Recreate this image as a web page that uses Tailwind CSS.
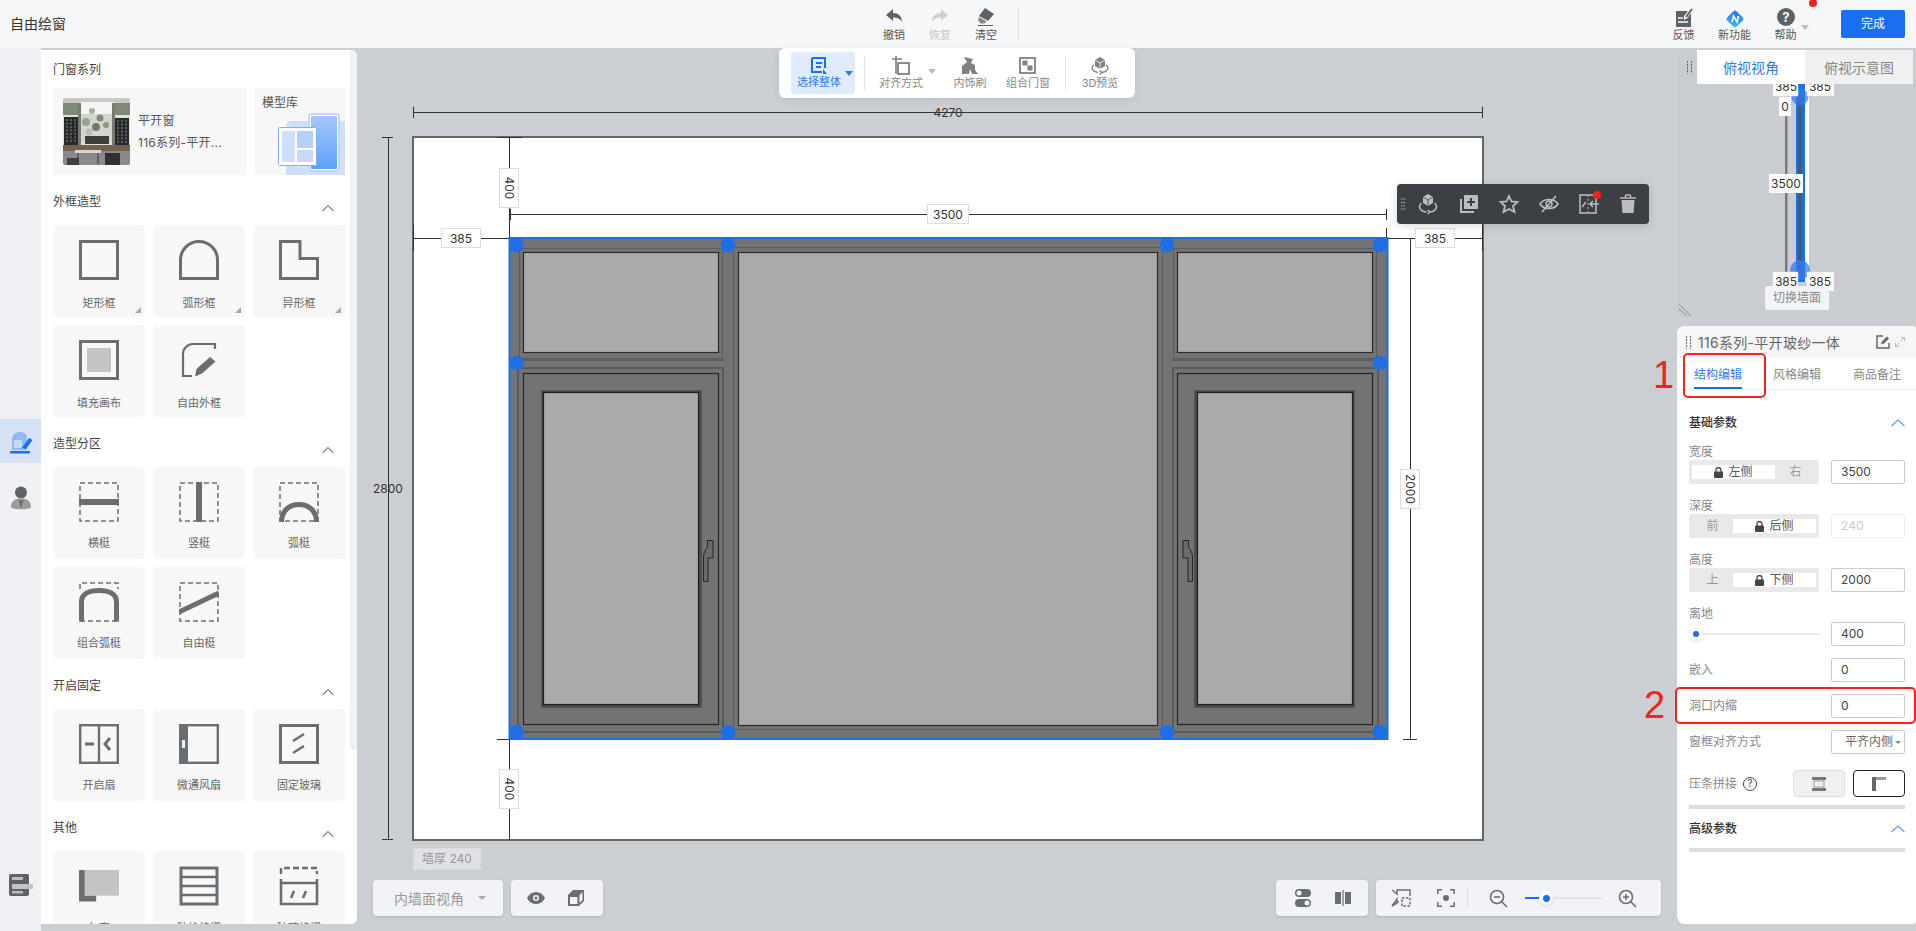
<!DOCTYPE html>
<html lang="zh">
<head>
<meta charset="utf-8">
<title>自由绘窗</title>
<script src="https://cdn.jsdelivr.net/npm/@tailwindcss/browser@4"></script>
</head>
<body class="bg-[#cbced3] [font-family:Inter,'Noto_Sans_CJK_SC',sans-serif] overflow-hidden">
<div class="relative w-[1916px] h-[931px] overflow-hidden flex flex-col">

  <!-- top bar -->
  <header class="h-12 shrink-0 bg-[#f6f7f9] flex items-center">
    <div class="w-[871px] pl-[10px] -mt-[1px] text-[14px] text-[#333]">自由绘窗</div>
    <div class="w-[46px] flex flex-col items-center text-[11px] leading-[14px] text-[#555]">
      <svg class="w-[18px] h-[21px]" viewBox="0 0 18 21"><path d="M1 8 L8 2 V6 C13 6 17 9 17 15 C15 11.500 12 10.500 8 10.500 V14Z" fill="#5f6265"/></svg>撤销
    </div>
    <div class="w-[46px] flex flex-col items-center text-[11px] leading-[14px] text-[#c8c8c8]">
      <svg class="w-[18px] h-[21px]" viewBox="0 0 18 21"><path d="M17 8 L10 2 V6 C5 6 1 9 1 15 C3 11.500 6 10.500 10 10.500 V14Z" fill="#cfcfcf"/></svg>恢复
    </div>
    <div class="w-[46px] flex flex-col items-center text-[11px] leading-[14px] text-[#555]">
      <svg class="w-[18px] h-[21px]" viewBox="0 0 18 21"><path d="M8 1 L17 7 L11 14 L2 9Z" fill="#5f6265"/><path d="M2 10 L9.500 14.500 L7.500 16.500 H3.500 L1 13Z" fill="#5f6265" opacity=".75"/><path d="M1 18 H16 V19 H1Z" fill="#5f6265"/></svg>清空
    </div>
    <div class="ml-[9px] w-px h-8 bg-[#dcdde0]"></div>

    <div class="ml-auto flex items-center mr-[11px]">
      <div class="w-[51px] flex flex-col items-center text-[11px] leading-[14px] text-[#555]">
        <svg class="w-5 h-[21px]" viewBox="0 0 20 21"><path d="M2 4 H14 L10 9 V13 L13.500 11 L17 6 V20 H2Z" fill="#5f6265"/><path d="M4 11 H9 M4 15 H14" stroke="#f6f7f9" stroke-width="1.500"/><path d="M12 10 L18 2" stroke="#5f6265" stroke-width="2"/></svg>反馈
      </div>
      <div class="w-[51px] flex flex-col items-center text-[11px] leading-[14px] text-[#555]">
        <svg class="w-5 h-[21px]" viewBox="0 0 20 21"><defs><linearGradient id="nf" x1="0" y1="0" x2="1" y2="1"><stop offset="0" stop-color="#1a6ff0"/><stop offset="1" stop-color="#3fc2f5"/></linearGradient></defs><rect x="3.500" y="5.500" width="13" height="13" rx="2" transform="rotate(45 10 12)" fill="url(#nf)"/><path d="M7 15 L8.500 9 L12 15 L13.500 9" stroke="#fff" stroke-width="1.600" fill="none"/></svg>新功能
      </div>
      <div class="relative w-[51px] flex flex-col items-center text-[11px] leading-[14px] text-[#555]">
        <svg class="w-5 h-[21px]" viewBox="0 0 20 21"><circle cx="10" cy="10" r="9" fill="#5f6265"/><text x="10" y="14.500" text-anchor="middle" font-size="13" font-weight="700" fill="#f6f7f9">?</text></svg>帮助
        <span class="absolute left-[41px] top-[18px] border-x-[4px] border-x-transparent border-t-[5px] border-t-[#bbb]"></span>
        <span class="absolute left-[49px] top-[-8px] w-2 h-2 rounded-full bg-[#f5221b]"></span>
      </div>
      <div class="ml-[30px] w-16 h-7 rounded-[2px] bg-[#1a6ff0] text-white text-[12px] flex items-center justify-center">完成</div>
    </div>
  </header>

  <div class="flex-1 flex min-h-0">
    <!-- left rail -->
    <nav class="w-[41px] shrink-0 bg-[#eff1f5] flex flex-col items-center">
      <div class="mt-[371px] w-full h-11 bg-[#d5e2f5] flex items-center justify-center">
        <svg class="w-[24px] h-[26px]" viewBox="0 0 24 26"><path d="M3 22 V11 C3 2 17 2 18 9 V22Z" fill="#8fb8f5"/><path d="M5 12 H13 V20 H5Z" fill="#c4dafa"/><path d="M13 20 L20 10 L23.500 12 L17 21 Z" fill="#1a6ff0"/><rect x="1" y="23" width="20" height="2.500" rx="1" fill="#1a6ff0"/></svg>
      </div>
      <div class="mt-[23px]">
        <svg class="w-[22px] h-6" viewBox="0 0 22 24"><circle cx="11" cy="6.500" r="6" fill="#5f6265"/><path d="M1 21 C1 15 5 12.500 11 12.500 C17 12.500 21 15 21 21 C21 24 1 24 1 21Z" fill="#9a9b9d"/><path d="M8 13 L11 15 L14 13 L11 22Z" fill="#6b6e71"/></svg>
      </div>
      <div class="mt-auto mb-[35px]">
        <svg class="w-[24px] h-[22px]" viewBox="0 0 24 22"><rect x="0" y="0" width="20" height="22" rx="2" fill="#5f6265"/><rect x="3" y="3" width="11" height="3" fill="#bbb"/><rect x="3" y="10" width="21" height="5" rx="1" fill="#c4c4c4"/><rect x="3" y="17" width="11" height="2.500" fill="#bbb"/></svg>
      </div>
    </nav>

    <!-- left panel -->
    <aside class="relative w-[316px] h-[874px] mt-[2px] shrink-0 bg-white rounded-r-[6px] overflow-hidden pl-[12px] pr-[12px] text-[#666]">
      <div class="absolute right-0 top-0 w-[7px] h-[700px] bg-[#f1f1f1] rounded-[3px]"></div>

      <h2 class="pt-[10px] pb-2 text-[12px] leading-[20px] text-[#444]">门窗系列</h2>
      <div class="flex gap-2">
        <div class="w-[193px] h-[87px] bg-[#f7f7f7] flex items-center pl-[10px]">
          <svg class="w-[67px] h-[67px] rounded-[2px]" viewBox="0 0 67 67">
            <rect width="67" height="67" fill="#dfe3dd"/>
            <rect x="0" y="0" width="67" height="6" fill="#c7c9c4"/>
            <rect x="17" y="4" width="34" height="12" fill="#f4f5f2"/>
            <rect x="17" y="16" width="34" height="28" fill="#d2d6cd"/>
            <rect x="0" y="5" width="15" height="12" fill="#7e8a78"/>
            <rect x="50" y="5" width="17" height="12" fill="#7e8a78"/>
            <rect x="1" y="19" width="14" height="28" fill="#26282a"/>
            <rect x="52" y="20" width="14" height="27" fill="#26282a"/>
            <path d="M4 21 V45 M8 21 V45 M12 21 V45 M55 22 V45 M59 22 V45 M63 22 V45" stroke="#8d908c" stroke-width="1" stroke-dasharray="2 1.500"/>
            <rect x="15" y="5" width="3" height="43" fill="#7c7773"/>
            <rect x="49" y="5" width="3" height="43" fill="#7c7773"/>
            <circle cx="29" cy="13" r="3" fill="#a7b29f"/><circle cx="37" cy="20" r="3.500" fill="#7e8b78"/><circle cx="23" cy="24" r="4" fill="#97a38f"/><circle cx="33" cy="29" r="4" fill="#6f7c6a"/><circle cx="43" cy="27" r="3" fill="#8a9684"/><circle cx="26" cy="34" r="3.500" fill="#b9c0b3"/>
            <rect x="22" y="38" width="24" height="8" fill="#3c3e3c"/>
            <rect x="0" y="47" width="67" height="6" fill="#75604c"/>
            <rect x="0" y="53" width="67" height="14" fill="#8a8b88"/>
            <rect x="4" y="60" width="12" height="7" fill="#3f3f3d"/>
            <rect x="12" y="52" width="26" height="3" fill="#d6d6d0"/>
            <path d="M15 55 V66 M35 55 V66" stroke="#3a3a38" stroke-width="1"/>
            <rect x="42" y="55" width="15" height="12" fill="#33312f"/>
          </svg>
          <div class="ml-[8px] text-[12px] leading-[22px] text-[#555] tracking-[0.25px]">
            <div>平开窗</div>
            <div>116系列-平开...</div>
          </div>
        </div>
        <div class="relative w-[91px] h-[87px] bg-[#f7f7f7] overflow-hidden text-[12px] text-[#555] pl-2 pt-[5px] leading-[20px]">
          模型库
          <svg class="absolute left-0 top-0 w-[91px] h-[87px]" viewBox="0 0 91 87">
            <defs><linearGradient id="dr" x1="0" y1="0" x2="0" y2="1"><stop offset="0" stop-color="#a9cafa"/><stop offset="1" stop-color="#5a9efa"/></linearGradient></defs>
            <path d="M32 38 a5 5 0 0 1 5 -5 H91 V87 H32Z" fill="#cfe0fd"/>
            <rect x="55.500" y="26.500" width="29" height="56" rx="2" fill="url(#dr)" stroke="#fff" stroke-width="3"/>
            <rect x="55" y="26" width="30" height="57" rx="2" fill="none" stroke="#7fb0f8" stroke-width="1"/>
            <rect x="24.500" y="39.500" width="38" height="38" rx="1" fill="#fff" stroke="#7fb0f8" stroke-width="1"/>
            <rect x="28" y="43" width="13" height="31" fill="#cfdffc"/>
            <rect x="43" y="43" width="16" height="17" fill="#b5cffa"/>
            <rect x="43" y="62" width="16" height="12" fill="#c4d9fb"/>
          </svg>
        </div>
      </div>

      <!-- 外框造型 -->
      <div class="h-[50px] flex justify-between pr-[11px]">
        <h2 class="pt-[17px] text-[12px] leading-[20px] text-[#444]">外框造型</h2>
        <svg class="mt-[29px] w-3 h-2" viewBox="0 0 12 8"><path d="M0.500 7 L6 1.500 L11.500 7" fill="none" stroke="#888" stroke-width="1.200"/></svg>
      </div>
      <div class="grid grid-cols-[92px_92px_92px] gap-2">
        <div class="relative h-[92px] rounded-[4px] bg-[#f7f7f7] flex flex-col items-center pt-[15px] text-[11px] leading-[16px]">
          <svg class="w-10 h-10 mb-[15px]" viewBox="0 0 40 40"><rect x="1.500" y="1.500" width="37" height="37" fill="none" stroke="#6b6e71" stroke-width="3"/></svg>矩形框
          <span class="absolute right-[4px] bottom-[4px] border-l-[6px] border-l-transparent border-b-[6px] border-b-[#aaa]"></span>
        </div>
        <div class="relative h-[92px] rounded-[4px] bg-[#f7f7f7] flex flex-col items-center pt-[15px] text-[11px] leading-[16px]">
          <svg class="w-10 h-10 mb-[15px]" viewBox="0 0 40 40"><path d="M1.500 38.500 V20 a18.500 18.500 0 0 1 37 0 V38.500Z" fill="none" stroke="#6b6e71" stroke-width="3"/></svg>弧形框
          <span class="absolute right-[4px] bottom-[4px] border-l-[6px] border-l-transparent border-b-[6px] border-b-[#aaa]"></span>
        </div>
        <div class="relative h-[92px] rounded-[4px] bg-[#f7f7f7] flex flex-col items-center pt-[15px] text-[11px] leading-[16px]">
          <svg class="w-10 h-10 mb-[15px]" viewBox="0 0 40 40"><path d="M1.500 1.500 H21 V18.500 H38.500 V38.500 H1.500Z" fill="none" stroke="#6b6e71" stroke-width="3"/></svg>异形框
          <span class="absolute right-[4px] bottom-[4px] border-l-[6px] border-l-transparent border-b-[6px] border-b-[#aaa]"></span>
        </div>
        <div class="h-[92px] rounded-[4px] bg-[#f7f7f7] flex flex-col items-center pt-[15px] text-[11px] leading-[16px]">
          <svg class="w-10 h-10 mb-[15px]" viewBox="0 0 40 40"><rect x="1.500" y="1.500" width="37" height="37" fill="none" stroke="#6b6e71" stroke-width="3"/><rect x="8" y="8" width="24" height="24" fill="#c4c4c4"/></svg>填充画布
        </div>
        <div class="h-[92px] rounded-[4px] bg-[#f7f7f7] flex flex-col items-center pt-[15px] text-[11px] leading-[16px]">
          <svg class="w-10 h-10 mb-[15px]" viewBox="0 0 40 40"><path d="M36 9 V4 H14 a10 10 0 0 0 -10 10 V36 H13" fill="none" stroke="#6b6e71" stroke-width="2.200"/><path d="M16 36.500 L17.500 29 L31 17 L36.500 21.500 L23 33.500Z" fill="#6b6e71"/></svg>自由外框
        </div>
      </div>

      <!-- 造型分区 -->
      <div class="h-[50px] flex justify-between pr-[11px]">
        <h2 class="pt-[17px] text-[12px] leading-[20px] text-[#444]">造型分区</h2>
        <svg class="mt-[29px] w-3 h-2" viewBox="0 0 12 8"><path d="M0.500 7 L6 1.500 L11.500 7" fill="none" stroke="#888" stroke-width="1.200"/></svg>
      </div>
      <div class="grid grid-cols-[92px_92px_92px] gap-2">
        <div class="h-[92px] rounded-[4px] bg-[#f7f7f7] flex flex-col items-center pt-[15px] text-[11px] leading-[16px]">
          <svg class="w-10 h-10 mb-[13px]" viewBox="0 0 40 40"><rect x="1" y="1" width="38" height="38" fill="none" stroke="#6b6e71" stroke-width="1.500" stroke-dasharray="5 3"/><rect y="17" width="40" height="6" fill="#6b6e71"/></svg>横梃
        </div>
        <div class="h-[92px] rounded-[4px] bg-[#f7f7f7] flex flex-col items-center pt-[15px] text-[11px] leading-[16px]">
          <svg class="w-10 h-10 mb-[13px]" viewBox="0 0 40 40"><rect x="1" y="1" width="38" height="38" fill="none" stroke="#6b6e71" stroke-width="1.500" stroke-dasharray="5 3"/><rect x="17" width="6" height="40" fill="#6b6e71"/></svg>竖梃
        </div>
        <div class="h-[92px] rounded-[4px] bg-[#f7f7f7] flex flex-col items-center pt-[15px] text-[11px] leading-[16px]">
          <svg class="w-10 h-10 mb-[13px]" viewBox="0 0 40 40"><rect x="1" y="1" width="38" height="38" fill="none" stroke="#6b6e71" stroke-width="1.500" stroke-dasharray="5 3"/><path d="M2.500 40 C2.500 29 10 22.500 20 22.500 S37.500 29 37.500 40" fill="none" stroke="#6b6e71" stroke-width="5"/></svg>弧梃
        </div>
        <div class="h-[92px] rounded-[4px] bg-[#f7f7f7] flex flex-col items-center pt-[15px] text-[11px] leading-[16px]">
          <svg class="w-10 h-10 mb-[13px]" viewBox="0 0 40 40"><path d="M1 7 V1 H39 V7" fill="none" stroke="#6b6e71" stroke-width="1.500" stroke-dasharray="5 3"/><path d="M1 39 H39" stroke="#6b6e71" stroke-width="1.500" stroke-dasharray="5 3"/><path d="M2.500 39.500 V20 C2.500 12 10 8.500 20 8.500 S37.500 12 37.500 20 V39.500" fill="none" stroke="#6b6e71" stroke-width="5"/></svg>组合弧梃
        </div>
        <div class="h-[92px] rounded-[4px] bg-[#f7f7f7] flex flex-col items-center pt-[15px] text-[11px] leading-[16px]">
          <svg class="w-10 h-10 mb-[13px]" viewBox="0 0 40 40"><rect x="1" y="1" width="38" height="38" fill="none" stroke="#6b6e71" stroke-width="1.500" stroke-dasharray="5 3"/><path d="M0 30 L40 11" stroke="#6b6e71" stroke-width="5"/></svg>自由梃
        </div>
      </div>

      <!-- 开启固定 -->
      <div class="h-[50px] flex justify-between pr-[11px]">
        <h2 class="pt-[17px] text-[12px] leading-[20px] text-[#444]">开启固定</h2>
        <svg class="mt-[29px] w-3 h-2" viewBox="0 0 12 8"><path d="M0.500 7 L6 1.500 L11.500 7" fill="none" stroke="#888" stroke-width="1.200"/></svg>
      </div>
      <div class="grid grid-cols-[92px_92px_92px] gap-2">
        <div class="h-[92px] rounded-[4px] bg-[#f7f7f7] flex flex-col items-center pt-[15px] text-[11px] leading-[16px]">
          <svg class="w-10 h-10 mb-[13px]" viewBox="0 0 40 40"><rect x="1.200" y="1.200" width="37.600" height="37.600" fill="none" stroke="#6b6e71" stroke-width="2.400"/><path d="M20 1 V39" stroke="#6b6e71" stroke-width="2.400"/><path d="M6 20 H15" stroke="#6b6e71" stroke-width="3"/><path d="M31 14 L26 20 L31 26" fill="none" stroke="#6b6e71" stroke-width="3"/></svg>开启扇
        </div>
        <div class="h-[92px] rounded-[4px] bg-[#f7f7f7] flex flex-col items-center pt-[15px] text-[11px] leading-[16px]">
          <svg class="w-10 h-10 mb-[13px]" viewBox="0 0 40 40"><rect x="1.200" y="1.200" width="37.600" height="37.600" fill="none" stroke="#6b6e71" stroke-width="2.400"/><rect width="9" height="40" fill="#6b6e71"/><rect x="3" y="16" width="3" height="8" fill="#eee"/></svg>微通风扇
        </div>
        <div class="h-[92px] rounded-[4px] bg-[#f7f7f7] flex flex-col items-center pt-[15px] text-[11px] leading-[16px]">
          <svg class="w-10 h-10 mb-[13px]" viewBox="0 0 40 40"><rect x="1.500" y="1.500" width="37" height="37" fill="none" stroke="#6b6e71" stroke-width="3"/><path d="M14 17 L25 10 M14 29 L25 22" stroke="#6b6e71" stroke-width="2.500"/></svg>固定玻璃
        </div>
      </div>

      <!-- 其他 -->
      <div class="h-[50px] flex justify-between pr-[11px]">
        <h2 class="pt-[17px] text-[12px] leading-[20px] text-[#444]">其他</h2>
        <svg class="mt-[29px] w-3 h-2" viewBox="0 0 12 8"><path d="M0.500 7 L6 1.500 L11.500 7" fill="none" stroke="#888" stroke-width="1.200"/></svg>
      </div>
      <div class="grid grid-cols-[92px_92px_92px] gap-2">
        <div class="h-[92px] rounded-[4px] bg-[#f7f7f7] flex flex-col items-center pt-[18px] text-[11px] leading-[16px]">
          <svg class="w-10 h-10 mb-[11px]" viewBox="0 0 42 40"><rect x="6" y="0" width="36" height="27" fill="#c4c4c4"/><path d="M0 0 H6 V27 H18 V33 H0Z" fill="#6b6e71"/></svg>包套
        </div>
        <div class="h-[92px] rounded-[4px] bg-[#f7f7f7] flex flex-col items-center pt-[15px] text-[11px] leading-[16px]">
          <svg class="w-10 h-10 mb-[14px]" viewBox="0 0 40 40"><rect x="2" y="2" width="36" height="36" fill="none" stroke="#6b6e71" stroke-width="3"/><path d="M2 11 H38 M2 20 H38 M2 29 H38" stroke="#6b6e71" stroke-width="2.500"/></svg>防栓格栅
        </div>
        <div class="h-[92px] rounded-[4px] bg-[#f7f7f7] flex flex-col items-center pt-[15px] text-[11px] leading-[16px]">
          <svg class="w-10 h-10 mb-[14px]" viewBox="0 0 40 40"><path d="M2 8 V2 H38 V8" fill="none" stroke="#6b6e71" stroke-width="2.400" stroke-dasharray="6 3"/><path d="M2 13 V38 H38 V13 M2 17 H38" fill="none" stroke="#6b6e71" stroke-width="2.600"/><path d="M12 32 L15 25 M24 32 L27 25" stroke="#6b6e71" stroke-width="2.500"/></svg>玻璃格栅
        </div>
      </div>
    </aside>

    <!-- drawing canvas -->
    <main class="relative flex-1 min-w-0">
      <svg class="absolute left-0 top-0 w-[1320px] h-[883px]" viewBox="357 48 1320 883">
        <defs>
          <g id="win-side">
            <rect x="519.500" y="248.500" width="203" height="110" fill="none" stroke="#5d5d5d"/>
            <rect x="523.500" y="252.500" width="195" height="100" fill="#a9aaac" stroke="#2b2b2b" stroke-width="1.200"/>
            <path d="M510 360 H724" stroke="#585858" stroke-width="1.500"/>
            <rect x="518" y="368" width="205" height="364" fill="none" stroke="#5a5a5a" stroke-width="2"/>
            <rect x="523.500" y="373.500" width="195" height="351" fill="none" stroke="#262626" stroke-width="1.200"/>
            <rect x="541.500" y="390.500" width="160" height="317" fill="#4b4b4b" stroke="#555"/>
            <rect x="543.500" y="392.500" width="155" height="312" fill="#a9aaac" stroke="#1f1f1f" stroke-width="1.200"/>
            <path d="M703.500 581.500 V558 C703.500 552 706 549 707.500 547 V540.500 H713 V558 H708 V581.500Z" fill="#6a6a6a" stroke="#262626"/>
          </g>
        </defs>

        <!-- wall -->
        <rect x="413" y="137" width="1070" height="703" fill="#fff" stroke="#666" stroke-width="2"/>

        <!-- outer dimensions -->
        <g stroke="#333" stroke-width="1" fill="none">
          <path d="M413 112.500 H1483 M413.500 107 V118 M1482.500 107 V118"/>
          <path d="M388.500 137 V840 M382 137.500 H393 M382 839.500 H393"/>
          <path d="M509.500 137 V238 M497 137.500 H522"/>
          <path d="M509.500 739 V840 M497 739.500 H522"/>
          <path d="M413 238.500 H509 M413.500 225 V251"/>
          <path d="M1387 238.500 H1483 M1482.500 225 V251"/>
          <path d="M510 214.500 H1387 M510.500 209 V220 M1386.500 209 V220 M1386.500 228 V238"/>
          <path d="M1410.500 238 V739 M1403 238.500 H1417 M1403 739.500 H1417"/>
        </g>

        <!-- window -->
        <rect x="510" y="238" width="877" height="501" fill="#747373"/>
        <use href="#win-side"/>
        <use href="#win-side" transform="translate(1896 0) scale(-1 1)"/>
        <rect x="733.500" y="247.500" width="429" height="482" fill="none" stroke="#5d5d5d"/>
        <rect x="738.500" y="252.500" width="419" height="473" fill="#a9aaac" stroke="#2b2b2b" stroke-width="1.200"/>
        <rect x="509.500" y="238" width="878" height="501" fill="none" stroke="#1a6fe8" stroke-width="2"/>

        <!-- handles -->
        <g fill="#1e6ee6">
          <circle cx="516.500" cy="245" r="7.300"/><circle cx="728" cy="245" r="7.300"/><circle cx="1167" cy="245" r="7.300"/><circle cx="1380" cy="245" r="7.300"/>
          <circle cx="516.500" cy="363" r="7.300"/><circle cx="1380" cy="363" r="7.300"/>
          <circle cx="516.500" cy="732" r="7.300"/><circle cx="728" cy="732" r="7.300"/><circle cx="1167" cy="732" r="7.300"/><circle cx="1380" cy="732" r="7.300"/>
        </g>

        <!-- labels -->
        <g font-size="12" fill="#333" text-anchor="middle">
          <text x="948" y="116.500">4270</text>
          <text x="388" y="492.500">2800</text>
          <rect x="441.500" y="228.500" width="39" height="19" fill="#fff" stroke="#ddd"/><text x="461" y="242.500">385</text>
          <rect x="1415.500" y="228.500" width="39" height="19" fill="#fff" stroke="#ddd"/><text x="1435" y="242.500">385</text>
          <rect x="927.500" y="204.500" width="41" height="19" fill="#fff" stroke="#ddd"/><text x="948" y="218.500">3500</text>
          <rect x="499.500" y="168.500" width="19" height="39" fill="#fff" stroke="#ddd"/><text transform="rotate(90 509 188)" x="509" y="192.500">400</text>
          <rect x="499.500" y="769.500" width="19" height="39" fill="#fff" stroke="#ddd"/><text transform="rotate(90 509 789)" x="509" y="793.500">400</text>
          <rect x="1400.500" y="469.500" width="19" height="39" fill="#fff" stroke="#ddd"/><text transform="rotate(90 1410 489)" x="1410" y="493.500">2000</text>
        </g>
      </svg>

      <div class="absolute left-[56px] top-[800px] w-[68px] h-[22px] bg-[#dfe1e5] border border-[#d8dade] text-[12px] text-[#999] flex items-center justify-center">墙厚 240</div>

      <!-- floating toolbar -->
      <div class="absolute left-[422px] top-0 w-[356px] h-[50px] bg-white rounded-[6px] shadow-[0_2px_8px_rgba(0,0,0,0.08)] flex items-center text-[11px] leading-[14px] text-[#888]">
        <div class="relative ml-[12px] w-[64px] h-[42px] rounded-[3px] bg-[#e0ecfd] text-[#2f7df0] pr-[8px] pt-[4px] flex flex-col items-center">
          <svg class="w-[18px] h-[19px]" viewBox="0 0 18 19"><path d="M2 2 H15 V12 M2 2 V16 H12 M6 7 H12 M6 11 H11" fill="none" stroke="#1a6ff0" stroke-width="2"/><path d="M13 13 L17 18 H13Z" fill="#1a6ff0"/></svg>
          选择整体
          <span class="absolute right-[2px] top-[19px] border-x-[4px] border-x-transparent border-t-[5px] border-t-[#2f7df0]"></span>
        </div>
        <div class="ml-[9px] w-px h-[34px] bg-[#e6e6e6]"></div>
        <div class="relative ml-[6px] w-[60px] flex flex-col items-center">
          <svg class="w-[18px] h-[19px] mb-[1px]" viewBox="0 0 18 19"><path d="M0 3 H10 M4 0 V3 M4 3 V18" fill="none" stroke="#808080" stroke-width="1.600"/><rect x="6" y="7" width="11" height="11" fill="none" stroke="#808080" stroke-width="1.800"/></svg>
          对齐方式
          <span class="absolute right-[-5px] top-[13px] border-x-[4px] border-x-transparent border-t-[5px] border-t-[#bbb]"></span>
        </div>
        <div class="ml-[12px] w-[54px] flex flex-col items-center">
          <svg class="w-[18px] h-[19px] mb-[1px]" viewBox="0 0 18 19"><path d="M1 18 V10 L6 6 L3 1 L12 3 L10 7 L14 9 V14 L17 18Z" fill="#808080"/><path d="M8 18 L9 13 L11 18Z" fill="#fff"/></svg>
          内饰刷
        </div>
        <div class="ml-[1px] w-[60px] flex flex-col items-center">
          <svg class="w-[18px] h-[19px] mb-[1px]" viewBox="0 0 18 19"><rect x="1" y="2" width="15" height="15" fill="none" stroke="#808080" stroke-width="1.800"/><rect x="3.500" y="4.500" width="5" height="5" fill="#808080"/><rect x="8.500" y="9.500" width="5" height="5" fill="#808080"/></svg>
          组合门窗
        </div>
        <div class="ml-[7px] w-px h-[34px] bg-[#e6e6e6]"></div>
        <div class="ml-[4px] w-[60px] flex flex-col items-center">
          <svg class="w-[20px] h-[19px] mb-[1px]" viewBox="0 0 20 19"><path d="M10 1 L15 4 V10 L10 13 L5 10 V4Z" fill="#808080"/><path d="M10 7 V13 M10 7 L15 4 M10 7 L5 4" stroke="#fff" stroke-width=".8"/><path d="M4 9 C0 12 3 16 8 16.500 M16 9 C20 12 17 16 12 16.500 M9.500 14.500 L12 16.500 L9.500 18.500" fill="none" stroke="#808080" stroke-width="1.300"/></svg>
          3D预览
        </div>
      </div>

      <!-- element toolbar -->
      <div class="absolute left-[1040px] top-[136px] w-[252px] h-10 rounded-[4px] bg-[#3c3f44] shadow-[0_2px_8px_rgba(0,0,0,0.15)] flex items-center">
        <svg class="ml-[4px] w-[4px] h-[12px]" viewBox="0 0 4 12"><path d="M0 1 H4 M0 4.500 H4 M0 8 H4 M0 11 H4" stroke="#bbb" stroke-dasharray="1.500 1"/></svg>
        <svg class="ml-[12px] w-[22px] h-[22px]" viewBox="0 0 22 22"><path d="M11 1 L16 4 V10 L11 13 L6 10 V4Z" fill="#bdbdbd"/><path d="M11 7 V13 M11 7 L16 4 M11 7 L6 4" stroke="#3c3f44" stroke-width=".8"/><path d="M4.500 10 C0 14 4 18.500 9.500 19 M17.500 10 C22 14 18 18.500 13 19 M10.500 17 L13 19 L10.500 21" fill="none" stroke="#bdbdbd" stroke-width="1.500"/></svg>
        <svg class="ml-[20px] w-[20px] h-[20px]" viewBox="0 0 20 20"><rect x="5" y="1" width="14" height="14" rx="1" fill="#bdbdbd"/><path d="M12 4 V12 M8 8 H16" stroke="#3c3f44" stroke-width="2"/><path d="M2 5 V18 H15" fill="none" stroke="#bdbdbd" stroke-width="2"/></svg>
        <svg class="ml-[20px] w-[20px] h-[20px]" viewBox="0 0 20 20"><path d="M10 2 L12.500 7.500 L18.500 8 L14 12 L15.500 18 L10 15 L4.500 18 L6 12 L1.500 8 L7.500 7.500Z" fill="none" stroke="#bdbdbd" stroke-width="1.800"/></svg>
        <svg class="ml-[20px] w-[20px] h-[20px]" viewBox="0 0 20 20"><path d="M1 10 C5 4 15 4 19 10 C15 16 5 16 1 10Z" fill="none" stroke="#bdbdbd" stroke-width="1.600"/><circle cx="10" cy="10" r="3" fill="none" stroke="#bdbdbd" stroke-width="1.400"/><path d="M3 18 L17 2" stroke="#bdbdbd" stroke-width="1.600"/></svg>
        <div class="relative ml-[20px] w-[20px] h-[20px]">
          <svg class="w-[20px] h-[20px]" viewBox="0 0 20 20"><rect x="1" y="1" width="16" height="18" fill="none" stroke="#bdbdbd" stroke-width="1.500"/><path d="M9 1 V19" stroke="#bdbdbd" stroke-dasharray="2 2"/><path d="M20 10 H11 M14 7 L11 10 L14 13 M3 13 L7 8" fill="none" stroke="#bdbdbd" stroke-width="1.500"/></svg>
          <span class="absolute right-[-2px] top-[-3px] w-2 h-2 rounded-full bg-[#f5221b]"></span>
        </div>
        <svg class="ml-[20px] w-[18px] h-[20px]" viewBox="0 0 18 20"><path d="M1 4 H17 M6 3 L7 1 H11 L12 3" fill="none" stroke="#bdbdbd" stroke-width="1.600"/><path d="M2.500 6 H15.500 L14.500 19 H3.500Z" fill="#bdbdbd"/></svg>
      </div>

      <!-- bottom controls -->
      <div class="absolute left-4 right-4 bottom-[15px] flex justify-between">
        <div class="flex gap-2">
          <div class="w-[130px] h-9 rounded-[4px] bg-[#f1f3f6] shadow-sm flex items-center justify-center gap-[14px] pl-[4px] text-[14px] text-[#999]">内墙面视角<span class="border-x-[4px] border-x-transparent border-t-[4px] border-t-[#aaa]"></span></div>
          <div class="w-[92px] h-9 rounded-[4px] bg-[#f1f3f6] shadow-sm flex items-center pl-[16px] gap-[22px]">
            <svg class="w-[18px] h-[14px]" viewBox="0 0 18 14"><path d="M0 7 C4 -1 14 -1 18 7 C14 15 4 15 0 7Z" fill="#6b6e71"/><circle cx="9" cy="7" r="3" fill="#f1f3f6"/><circle cx="9" cy="7" r="1.500" fill="#6b6e71"/></svg>
            <svg class="w-[18px] h-[18px]" viewBox="0 0 18 18"><path d="M1 6 L6 1 H17 V12 L12 17 H1Z" fill="#6b6e71"/><path d="M3 8 H10.500 V15 H3Z" fill="#f1f3f6"/><path d="M12.500 6 L15.500 3 V11 L12.500 14Z" fill="#f1f3f6"/></svg>
          </div>
        </div>
        <div class="flex gap-2">
          <div class="w-[92px] h-9 rounded-[4px] bg-[#f1f3f6] shadow-sm flex items-center pl-[19px] gap-[24px]">
            <svg class="w-4 h-[18px]" viewBox="0 0 16 18"><rect y="0" width="16" height="8" rx="4" fill="#6b6e71"/><rect y="10" width="16" height="8" rx="4" fill="#6b6e71"/><circle cx="4" cy="4" r="2.500" fill="#f1f3f6"/><circle cx="12" cy="14" r="2.500" fill="#f1f3f6"/></svg>
            <svg class="w-4 h-[16px]" viewBox="0 0 16 16"><rect y="2" width="6" height="12" fill="#6b6e71"/><rect x="10" y="2" width="6" height="12" fill="#6b6e71"/><path d="M8 0 V16" stroke="#6b6e71" stroke-width="1.200"/></svg>
          </div>
          <div class="w-[285px] h-9 rounded-[4px] bg-[#f1f3f6] shadow-sm flex items-center pl-[15px]">
            <svg class="w-5 h-[18px]" viewBox="0 0 20 18"><path d="M1 1 L6 5 V1 H19 V7 M6 10 V14 L1 17Z M6 13 H8" fill="none" stroke="#6b6e71" stroke-width="1.500"/><rect x="11" y="9" width="8" height="8" fill="none" stroke="#6b6e71" stroke-width="1.500" stroke-dasharray="2.500 1.500"/></svg>
            <svg class="ml-[26px] w-[18px] h-[18px]" viewBox="0 0 18 18"><path d="M0.800 5 V0.800 H5 M13 0.800 H17.200 V5 M17.200 13 V17.200 H13 M5 17.200 H0.800 V13" fill="none" stroke="#6b6e71" stroke-width="1.500"/><circle cx="9" cy="9" r="3" fill="#6b6e71"/></svg>
            <div class="ml-[12px] w-px h-5 bg-[#dcdde0]"></div>
            <svg class="ml-[21px] w-[19px] h-[19px]" viewBox="0 0 19 19"><circle cx="8" cy="8" r="6.500" fill="none" stroke="#6b6e71" stroke-width="1.600"/><path d="M5 8 H11" stroke="#6b6e71" stroke-width="1.600"/><path d="M12.500 12.500 L18 18" stroke="#6b6e71" stroke-width="1.600"/></svg>
            <div class="relative ml-[17px] w-[77px] h-[2px] bg-[#e2e3e6]">
              <div class="absolute left-0 top-0 w-[18px] h-[2px] bg-[#1a6ff0]"></div>
              <div class="absolute left-[14px] top-[-6px] w-[14px] h-[14px] rounded-full bg-white shadow-sm flex items-center justify-center"><span class="w-[7px] h-[7px] rounded-full bg-[#1a6ff0]"></span></div>
            </div>
            <svg class="ml-[16px] w-[19px] h-[19px]" viewBox="0 0 19 19"><circle cx="8" cy="8" r="6.500" fill="none" stroke="#6b6e71" stroke-width="1.600"/><path d="M5 8 H11 M8 5 V11" stroke="#6b6e71" stroke-width="1.600"/><path d="M12.500 12.500 L18 18" stroke="#6b6e71" stroke-width="1.600"/></svg>
          </div>
        </div>
      </div>
    </main>

    <!-- right column -->
    <div class="w-[239px] shrink-0 pt-[2px] flex flex-col gap-2">
      <!-- top view -->
      <section class="relative h-[268px] rounded-l-[8px] bg-[#c9ccd1] overflow-hidden">
        <svg class="absolute left-0 top-0 w-[239px] h-[268px]" viewBox="1677 50 239 268">
          <rect x="1785" y="110" width="2.500" height="165" fill="#7a7a7a"/>
          <rect x="1805" y="84" width="4" height="198" fill="#fff"/>
          <rect x="1796" y="84" width="9" height="198" fill="#1a6ff0"/>
          <rect x="1798.500" y="94" width="3" height="180" fill="#555"/>
          <circle cx="1800" cy="97" r="8.500" fill="#2f7df0" opacity=".7"/>
          <circle cx="1800" cy="270" r="10" fill="#2f7df0" opacity=".75"/>
          <g font-size="12" fill="#333" text-anchor="middle">
            <rect x="1773" y="78" width="25" height="18" fill="#fff" stroke="#ddd" stroke-width=".5"/><text x="1786" y="90.500">385</text>
            <rect x="1807" y="78" width="27" height="18" fill="#fff" stroke="#ddd" stroke-width=".5"/><text x="1820" y="90.500">385</text>
            <rect x="1779" y="97" width="12" height="19" fill="#fff"/><text x="1785" y="111">0</text>
            <rect x="1769" y="174" width="34" height="19" fill="#fff"/><text x="1786" y="188">3500</text>
            <rect x="1773" y="272" width="25" height="19" fill="#fff" stroke="#ddd" stroke-width=".5"/><text x="1786" y="286">385</text>
            <rect x="1807" y="272" width="27" height="19" fill="#fff" stroke="#ddd" stroke-width=".5"/><text x="1820" y="286">385</text>
          </g>
          <path d="M1679 304 L1691 316 M1679 309 L1687 316" stroke="#8b8e92" stroke-width="1"/>
        </svg>
        <div class="relative flex text-[14px] h-[34px] pl-[20px]">
          <svg class="absolute left-[10px] top-[11px] w-[5px] h-[13px]" viewBox="0 0 5 13"><path d="M0.500 0 V13 M4.500 0 V13" stroke="#666" stroke-dasharray="2 1"/></svg>
          <div class="w-[108px] bg-white text-[#2f7df0] flex items-center justify-center">俯视视角</div>
          <div class="w-[108px] bg-[#f0f0f0] text-[#888] flex items-center justify-center">俯视示意图</div>
        </div>
        <div class="absolute left-[88px] top-[236px] w-16 h-6 rounded-[2px] bg-[#f1f3f6] text-[12px] text-[#888] flex items-center justify-center">切换墙面</div>
      </section>

      <!-- properties -->
      <section class="h-[598px] rounded-l-[8px] rounded-r-[4px] bg-white overflow-hidden text-[12px] text-[#888]">
        <div class="h-8 bg-[#f6f6f6] flex items-center pl-[9px] pr-[11px]">
          <svg class="w-[5px] h-[13px]" viewBox="0 0 5 13"><path d="M0.500 0 V13 M4.500 0 V13" stroke="#666" stroke-dasharray="2 1"/></svg>
          <span class="ml-[7px] text-[14px] text-[#666] tracking-[0.3px]">116系列-平开玻纱一体</span>
          <svg class="ml-auto w-[14px] h-[14px]" viewBox="0 0 14 14"><path d="M7 1 H1 V13 H13 V8" fill="none" stroke="#666" stroke-width="1.500"/><path d="M5 9.500 L6 6.500 L11 1.500 L13 3.500 L8 8.500Z" fill="#666"/></svg>
          <svg class="ml-[5px] w-[10px] h-[10px]" viewBox="0 0 10 10"><path d="M6 0.500 H9.500 V4 M9.500 0.500 L6 4 M4 9.500 H0.500 V6 M0.500 9.500 L4 6" fill="none" stroke="#bbb"/></svg>
        </div>
        <div class="relative h-8 border-b border-[#eee] flex items-center">
          <div class="absolute left-[17px] bottom-0 w-12 h-[2px] bg-[#1a6ff0]"></div>
          <span class="absolute left-[17px] top-[8px] text-[#2f7df0]">结构编辑</span>
          <span class="absolute left-[96px] top-[8px]">风格编辑</span>
          <span class="absolute left-[176px] top-[8px]">商品备注</span>
        </div>

        <div class="pl-[12px] pr-[11px]">
          <div class="pt-[23px] mb-[9px] flex items-center justify-between text-[#333] font-medium leading-[20px]">基础参数
            <svg class="w-[14px] h-2" viewBox="0 0 14 8"><path d="M0.500 7 L7 1 L13.500 7" fill="none" stroke="#5a9af5" stroke-width="1.100"/></svg>
          </div>

          <div class="h-[18px] leading-[20px]">宽度</div>
          <div class="flex justify-between">
            <div class="w-[130px] h-6 rounded-[2px] bg-[#e9e9e9] flex items-center px-[3px]">
              <div class="w-[83px] h-[14px] bg-white text-[#555] flex items-center justify-center gap-[5px]"><svg class="w-[9px] h-[11px]" viewBox="0 0 9 11"><path d="M2 5 V3 a2.500 2.500 0 0 1 5 0 V5" fill="none" stroke="#444" stroke-width="1.300"/><rect y="4.500" width="9" height="6.500" rx="1" fill="#444"/></svg>左侧</div>
              <div class="flex-1 text-center text-[#999]">右</div>
            </div>
            <div class="w-[74px] h-6 border border-[#ccc] rounded-[2px] pl-[9px] text-[#444] flex items-center">3500</div>
          </div>

          <div class="mt-3 h-[18px] leading-[20px]">深度</div>
          <div class="flex justify-between">
            <div class="w-[130px] h-6 rounded-[2px] bg-[#e9e9e9] flex items-center px-[3px]">
              <div class="flex-1 text-center text-[#999]">前</div>
              <div class="w-[83px] h-[14px] bg-white text-[#555] flex items-center justify-center gap-[5px]"><svg class="w-[9px] h-[11px]" viewBox="0 0 9 11"><path d="M2 5 V3 a2.500 2.500 0 0 1 5 0 V5" fill="none" stroke="#444" stroke-width="1.300"/><rect y="4.500" width="9" height="6.500" rx="1" fill="#444"/></svg>后侧</div>
            </div>
            <div class="w-[74px] h-6 border border-[#eee] rounded-[2px] pl-[9px] text-[#ccc] flex items-center">240</div>
          </div>

          <div class="mt-3 h-[18px] leading-[20px]">高度</div>
          <div class="flex justify-between">
            <div class="w-[130px] h-6 rounded-[2px] bg-[#e9e9e9] flex items-center px-[3px]">
              <div class="flex-1 text-center text-[#999]">上</div>
              <div class="w-[83px] h-[14px] bg-white text-[#555] flex items-center justify-center gap-[5px]"><svg class="w-[9px] h-[11px]" viewBox="0 0 9 11"><path d="M2 5 V3 a2.500 2.500 0 0 1 5 0 V5" fill="none" stroke="#444" stroke-width="1.300"/><rect y="4.500" width="9" height="6.500" rx="1" fill="#444"/></svg>下侧</div>
            </div>
            <div class="w-[74px] h-6 border border-[#ccc] rounded-[2px] pl-[9px] text-[#444] flex items-center">2000</div>
          </div>

          <div class="mt-3 h-[18px] leading-[20px]">离地</div>
          <div class="flex justify-between items-center">
            <div class="relative w-[130px] h-[2px] bg-[#ececec]">
              <div class="absolute left-0 top-[-6px] w-[14px] h-[14px] rounded-full bg-white shadow-sm flex items-center justify-center"><span class="w-[6px] h-[6px] rounded-full bg-[#1a6ff0]"></span></div>
            </div>
            <div class="w-[74px] h-6 border border-[#ccc] rounded-[2px] pl-[9px] text-[#444] flex items-center">400</div>
          </div>

          <div class="mt-3 flex justify-between items-center">嵌入
            <div class="w-[74px] h-6 border border-[#ccc] rounded-[2px] pl-[9px] text-[#444] flex items-center">0</div>
          </div>
          <div class="mt-3 flex justify-between items-center">洞口内缩
            <div class="w-[74px] h-6 border border-[#ccc] rounded-[2px] pl-[9px] text-[#444] flex items-center">0</div>
          </div>
          <div class="mt-3 flex justify-between items-center">窗框对齐方式
            <div class="w-[74px] h-6 border border-[#ccc] rounded-[2px] pl-[13px] text-[#666] flex items-center gap-[2px]">平齐内侧<span class="border-x-[3px] border-x-transparent border-t-[3px] border-t-[#888]"></span></div>
          </div>

          <div class="mt-4 flex items-center">压条拼接
            <span class="ml-[6px] w-[14px] h-[14px] rounded-full border border-[#444] text-[#444] text-[10px] flex items-center justify-center">?</span>
            <div class="ml-auto w-[52px] h-[27px] rounded-[4px] bg-[#f0f0f0] border border-[#ddd] flex items-center justify-center">
              <svg class="w-[14px] h-[14px]" viewBox="0 0 14 14"><rect width="14" height="3" fill="#777"/><rect y="11" width="14" height="3" fill="#777"/><rect x="2" y="4" width="10" height="6" fill="none" stroke="#999"/></svg>
            </div>
            <div class="ml-2 w-[52px] h-[27px] rounded-[4px] border border-[#222] flex items-center justify-center">
              <svg class="w-[14px] h-[14px]" viewBox="0 0 14 14"><rect width="14" height="3" fill="#999"/><rect width="4" height="14" fill="#666"/></svg>
            </div>
          </div>

          <div class="mt-2 h-1 bg-[#dddddd]"></div>
          <div class="mt-[10px] flex items-center justify-between text-[#333] font-medium leading-[20px]">高级参数
            <svg class="w-[14px] h-2" viewBox="0 0 14 8"><path d="M0.500 7 L7 1 L13.500 7" fill="none" stroke="#5a9af5" stroke-width="1.100"/></svg>
          </div>
          <div class="mt-[9px] h-1 bg-[#dddddd]"></div>
        </div>
      </section>
    </div>
  </div>

  <!-- red annotations -->
  <span class="absolute left-[1653px] top-[354px] text-[38px] leading-[42px] font-light text-[#f5221b] [font-family:'Liberation_Sans',sans-serif]">1</span>
  <span class="absolute left-[1644px] top-[684px] text-[38px] leading-[42px] font-light text-[#f5221b] [font-family:'Liberation_Sans',sans-serif]">2</span>
  <div class="absolute left-[1683px] top-[353px] w-[83px] h-[45px] border-[2.5px] border-[#f5221b] rounded-[5px]"></div>
  <div class="absolute left-[1675px] top-[687px] w-[241px] h-[37px] border-[2.5px] border-[#f5221b] rounded-[5px]"></div>
</div>
</body>
</html>
